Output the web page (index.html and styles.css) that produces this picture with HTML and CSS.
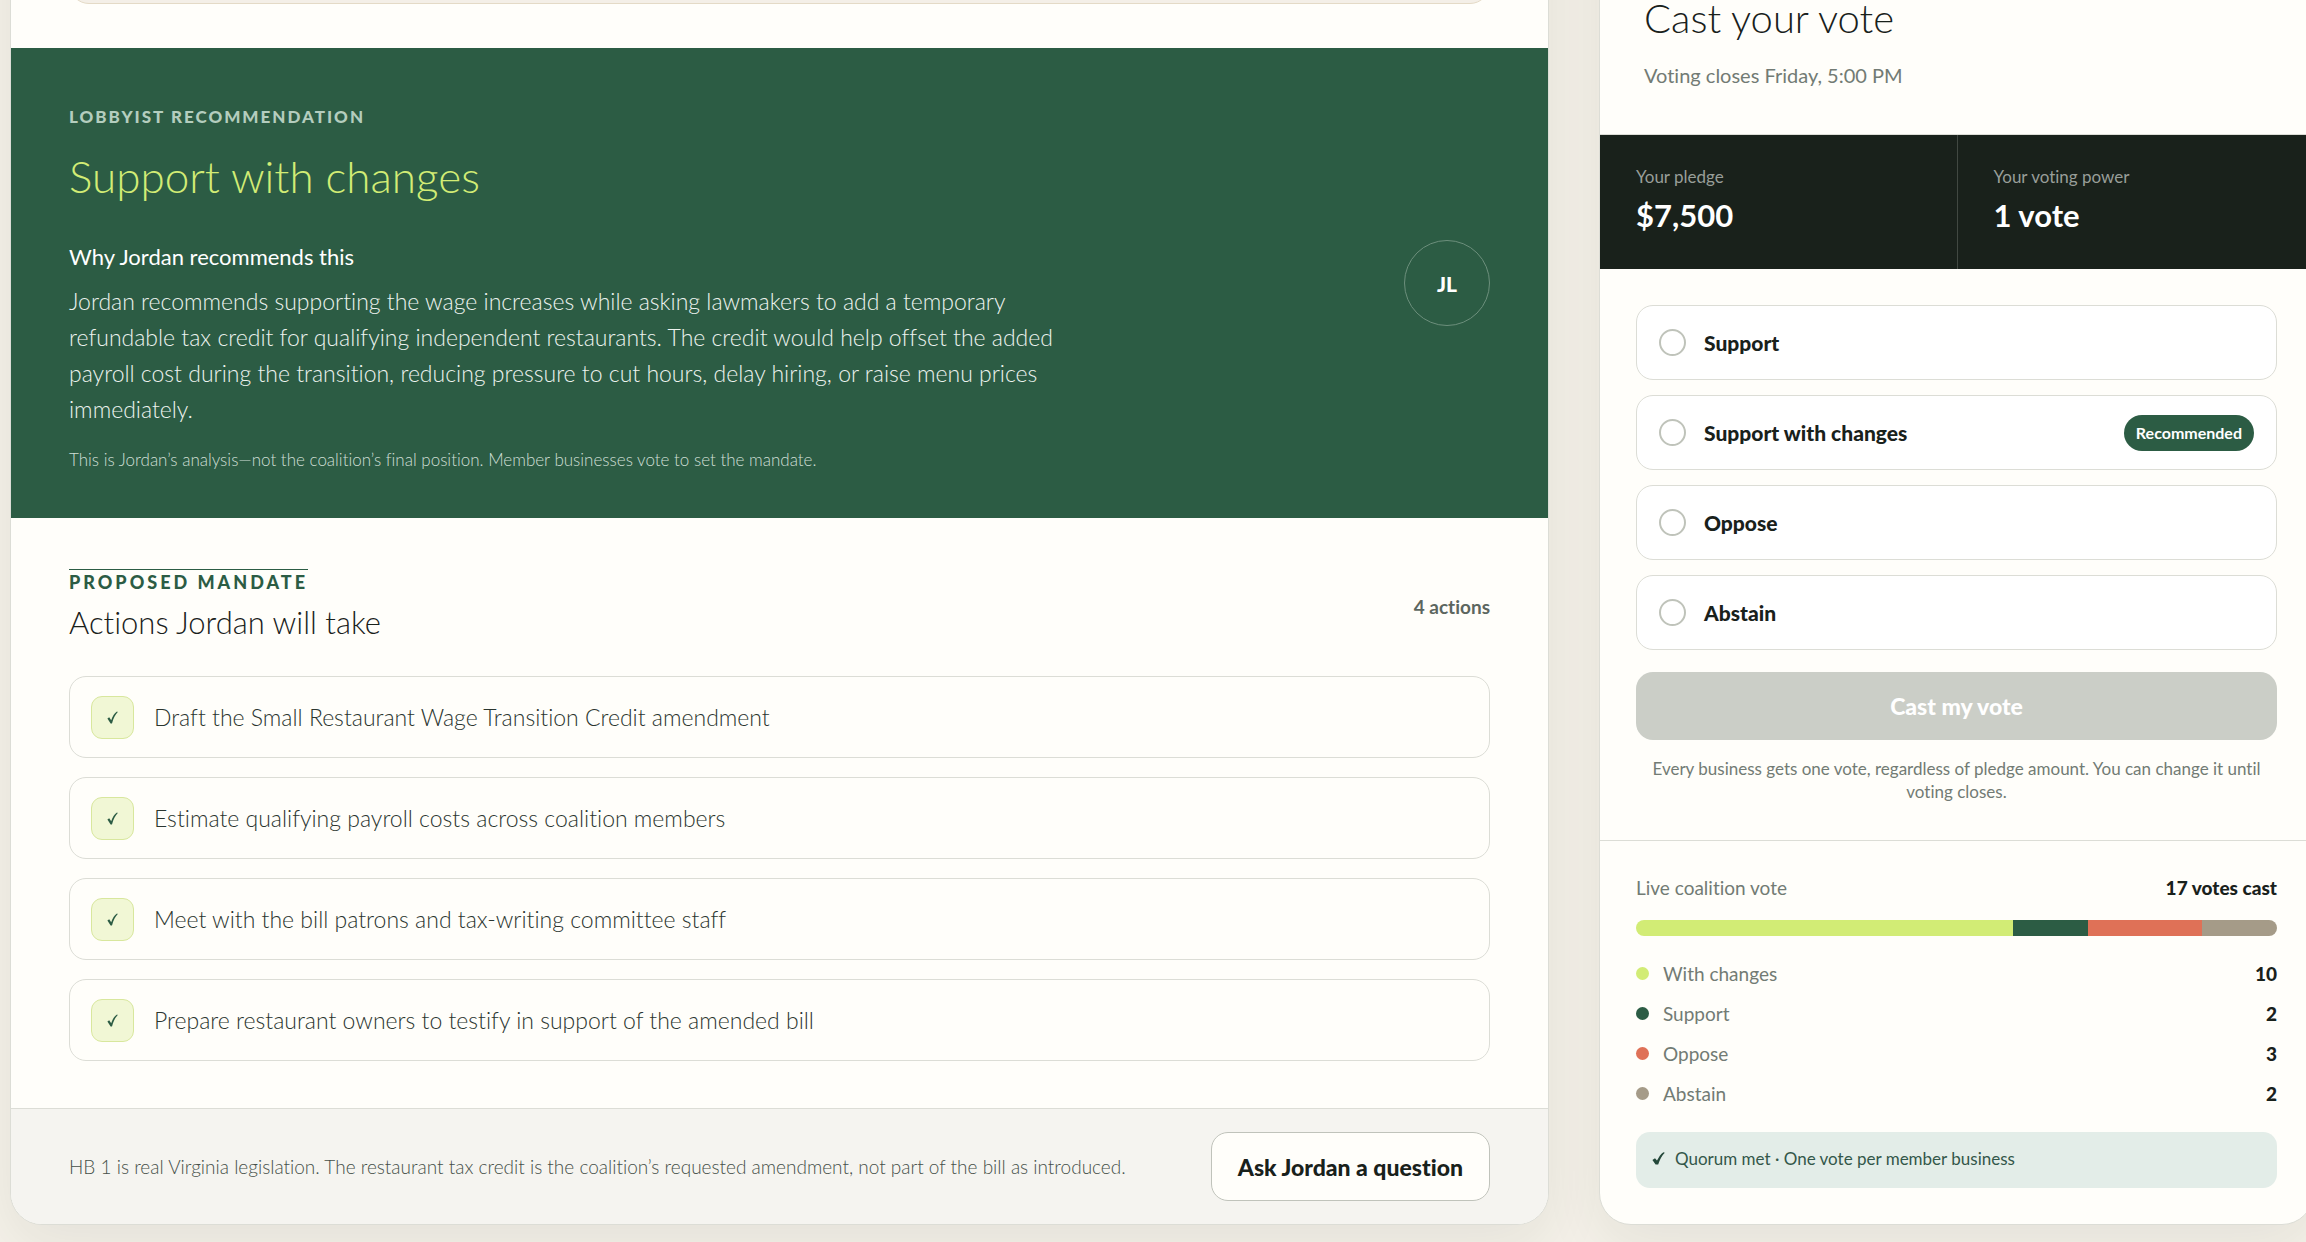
FILE: index.html
```
<!DOCTYPE html>
<html lang="en">
<head>
    <meta charset="UTF-8">
    <meta name="viewport" content="width=device-width, initial-scale=1.0">
    <title>HB 1 – Coalition vote</title>
    <link rel="stylesheet" href="styles.css">
</head>
<body>
<svg class="sprite" aria-hidden="true">
    <symbol id="check" viewBox="0 0 11 13">
        <path d="M0.4 7.4 L2.2 6.2 L4.2 9.2 C5.4 5.4 7.4 2 10 0.4 L10.8 1 C8.2 3.6 6.4 7.4 5 12.4 L3.6 12.4 Z"/>
    </symbol>
    <symbol id="check-heavy" viewBox="0 0 13 13">
        <path d="M0.4 8 L3 6.2 L5 8.6 C6.6 5.2 8.8 2 11.4 0.2 L12.8 0.8 C10 3.6 7.8 7.6 6.2 12.4 L3.6 12.6 Z"/>
    </symbol>
</svg>

<div class="layout">
    <main class="card">
        <section class="summary">
            <div class="summary-box"></div>
        </section>

        <section class="recommendation">
            <div class="recommendation-text">
                <p class="eyebrow">LOBBYIST RECOMMENDATION</p>
                <h2>Support with changes</h2>
                <h3>Why Jordan recommends this</h3>
                <p class="reason">Jordan recommends supporting the wage increases while asking lawmakers to add a temporary refundable tax credit for qualifying independent restaurants. The credit would help offset the added payroll cost during the transition, reducing pressure to cut hours, delay hiring, or raise menu prices immediately.</p>
                <p class="note">This is Jordan’s analysis—not the coalition’s final position. Member businesses vote to set the mandate.</p>
            </div>
            <div class="avatar">JL</div>
        </section>

        <section class="mandate">
            <div class="mandate-head">
                <div>
                    <span class="mandate-label">PROPOSED MANDATE</span>
                    <h2>Actions Jordan will take</h2>
                </div>
                <span class="count">4 actions</span>
            </div>
            <ul class="actions">
                <li><span class="tick"><svg><use href="#check"/></svg></span>Draft the Small Restaurant Wage Transition Credit amendment</li>
                <li><span class="tick"><svg><use href="#check"/></svg></span>Estimate qualifying payroll costs across coalition members</li>
                <li><span class="tick"><svg><use href="#check"/></svg></span>Meet with the bill patrons and tax-writing committee staff</li>
                <li><span class="tick"><svg><use href="#check"/></svg></span>Prepare restaurant owners to testify in support of the amended bill</li>
            </ul>
        </section>

        <footer class="card-footer">
            <p>HB 1 is real Virginia legislation. The restaurant tax credit is the coalition’s requested amendment, not part of the bill as introduced.</p>
            <button type="button" class="ask-button">Ask Jordan a question</button>
        </footer>
    </main>

    <aside class="card">
        <header class="vote-head">
            <h2>Cast your vote</h2>
            <p>Voting closes Friday, 5:00 PM</p>
        </header>

        <dl class="stats">
            <div>
                <dt>Your pledge</dt>
                <dd>$7,500</dd>
            </div>
            <div>
                <dt>Your voting power</dt>
                <dd>1 vote</dd>
            </div>
        </dl>

        <form class="vote-form">
            <div class="options">
                <label class="option"><input type="radio" name="vote" value="support">Support</label>
                <label class="option"><input type="radio" name="vote" value="changes">Support with changes <span class="badge">Recommended</span></label>
                <label class="option"><input type="radio" name="vote" value="oppose">Oppose</label>
                <label class="option"><input type="radio" name="vote" value="abstain">Abstain</label>
            </div>
            <button type="submit" class="cast-button" disabled>Cast my vote</button>
            <p class="help">Every business gets one vote, regardless of pledge amount. You can change it until voting closes.</p>
        </form>

        <section class="results">
            <div class="results-head">
                <span>Live coalition vote</span>
                <strong>17 votes cast</strong>
            </div>
            <div class="bar">
                <span class="changes" style="flex-grow: 10"></span>
                <span class="support" style="flex-grow: 2"></span>
                <span class="oppose" style="flex-grow: 3"></span>
                <span class="abstain" style="flex-grow: 2"></span>
            </div>
            <ul class="legend">
                <li><i class="changes"></i>With changes<strong>10</strong></li>
                <li><i class="support"></i>Support<strong>2</strong></li>
                <li><i class="oppose"></i>Oppose<strong>3</strong></li>
                <li><i class="abstain"></i>Abstain<strong>2</strong></li>
            </ul>
            <p class="quorum"><svg><use href="#check-heavy"/></svg>Quorum met · One vote per member business</p>
        </section>
    </aside>
</div>
</body>
</html>
```
FILE: styles.css
```
:root {
    --ink: #19211b;
    --muted: #727b74;
    --green: #2c5c44;
    --lime: #d2ec75;
    --coral: #df7157;
    --tan: #a59b88;
    --paper: #fffefa;
    --line: #dcddd6;
}

* {
    box-sizing: border-box;
}

body {
    margin: 0;
    font-family: Lato, sans-serif;
    font-variant-ligatures: none;
    color: var(--ink);
    background: #f5f1e9;
    overflow: hidden;
}

h2, h3, p, ul, dl, dd {
    margin: 0;
    padding: 0;
    font-weight: inherit;
    list-style: none;
}

h2 {
    font-weight: 300;
}

button {
    font-family: inherit;
    font-variant-ligatures: inherit;
    font-size: 23px;
    font-weight: 900;
    border-radius: 17px;
}

.sprite {
    display: none;
}

/* the page sits scrolled, so the tops of both cards are out of view */
.layout {
    display: grid;
    grid-template-columns: minmax(0, 1fr) 715px;
    gap: 50px;
    margin: -100px -8px 0 10px;
    padding-bottom: 60px;
}

.card {
    background: var(--paper);
    border: 1px solid var(--line);
    border-radius: 32px;
    box-shadow: 0 20px 60px rgba(24, 50, 30, 0.08);
    overflow: hidden;
}

.summary {
    padding: 40px 58px 44px;
}

.summary-box {
    height: 63px;
    background: #f4efe7;
    border: 1px solid #e4dac6;
    border-radius: 20px;
}

/* recommendation */
.recommendation {
    display: flex;
    justify-content: space-between;
    align-items: center;
    padding: 46px 58px;
    background: var(--green);
    color: #fff;
}

.recommendation-text {
    max-width: 1000px;
}

.eyebrow {
    font-size: 17px;
    font-weight: 900;
    line-height: 46px;
    letter-spacing: 2px;
    color: #b4cdbe;
}

.recommendation h2 {
    margin: 6px 0 36px;
    font-size: 44px;
    line-height: 60px;
    color: var(--lime);
}

.recommendation h3 {
    margin-bottom: 11px;
    font-size: 22px;
    line-height: 30px;
}

.reason {
    font-size: 23px;
    font-weight: 300;
    line-height: 36px;
    color: #edf3ef;
}

.note {
    margin-top: 21px;
    font-size: 17px;
    font-weight: 300;
    line-height: 24px;
    color: #cfdfd5;
}

.avatar {
    display: flex;
    justify-content: center;
    align-items: center;
    width: 86px;
    height: 86px;
    border: 1px solid #6c8f7c;
    border-radius: 50%;
    font-size: 21px;
    font-weight: 900;
}

/* mandate */
.mandate {
    padding: 51px 58px 47px;
}

.mandate-head {
    display: flex;
    justify-content: space-between;
    align-items: center;
    margin-bottom: 32px;
}

.mandate-label {
    display: inline-block;
    border-top: 1px solid var(--green);
    font-size: 18px;
    font-weight: 900;
    line-height: 24px;
    letter-spacing: 3px;
    color: var(--green);
    vertical-align: top;
}

.mandate h2 {
    margin-top: 6px;
    font-size: 31px;
    line-height: 44px;
}

.count {
    font-size: 19px;
    font-weight: 700;
    color: #5c665f;
}

.actions {
    display: grid;
    gap: 19px;
}

.actions li {
    display: flex;
    align-items: center;
    gap: 20px;
    min-height: 82px;
    padding: 0 21px;
    border: 1px solid var(--line);
    border-radius: 17px;
    font-size: 23px;
    font-weight: 300;
    color: #2b352f;
}

.tick {
    display: flex;
    justify-content: center;
    align-items: center;
    width: 43px;
    height: 43px;
    background: #f1f7d5;
    border: 1px solid #d8e79d;
    border-radius: 11px;
}

.tick svg {
    width: 11px;
    height: 13px;
    fill: var(--green);
}

.card-footer {
    display: flex;
    justify-content: space-between;
    align-items: center;
    padding: 23px 58px;
    background: #f5f4f0;
    border-top: 1px solid var(--line);
    font-size: 19px;
    font-weight: 300;
    color: #465049;
}

.ask-button {
    height: 69px;
    padding: 0 26px;
    background: var(--paper);
    border: 1px solid #c0c3bb;
    color: var(--ink);
}

/* vote panel */
.vote-head {
    padding: 99px 44px 44px;
    border-bottom: 1px solid var(--line);
}

.vote-head h2 {
    font-size: 40px;
    line-height: 36px;
}

.vote-head p {
    margin-top: 24px;
    font-size: 20px;
    line-height: 30px;
    color: var(--muted);
}

.stats {
    display: grid;
    grid-template-columns: 1fr 1fr;
    background: var(--ink);
    color: #fff;
}

.stats div {
    padding: 30px 36px 34px;
}

.stats div + div {
    border-left: 1px solid #414842;
}

.stats dt {
    font-size: 17px;
    line-height: 24px;
    color: #989e99;
}

.stats dd {
    margin-top: 6px;
    font-size: 31px;
    font-weight: 700;
    line-height: 40px;
}

.vote-form {
    padding: 36px 36px 37px;
}

.options {
    display: grid;
    gap: 15px;
}

.option {
    display: flex;
    align-items: center;
    min-height: 75px;
    padding: 0 22px;
    background: #fff;
    border: 1px solid var(--line);
    border-radius: 17px;
    font-size: 21px;
    font-weight: 900;
}

.option input {
    appearance: none;
    width: 27px;
    height: 27px;
    margin: 0 18px 0 0;
    border: 2px solid #bfc3ba;
    border-radius: 50%;
}

.option input:checked {
    border: 8px solid var(--green);
}

.badge {
    margin-left: auto;
    padding: 0 12px;
    background: var(--green);
    border-radius: 18px;
    font-size: 16px;
    font-weight: 700;
    line-height: 36px;
    color: #fff;
}

.cast-button {
    width: 100%;
    height: 68px;
    margin-top: 22px;
    background: #cbcec7;
    border: none;
    color: #fff;
}

.help {
    margin-top: 17px;
    font-size: 17px;
    line-height: 23px;
    text-align: center;
    color: var(--muted);
}

.results {
    padding: 34px 36px 35px;
    border-top: 1px solid var(--line);
    font-size: 19px;
    color: var(--muted);
}

.results strong {
    font-weight: 900;
    color: var(--ink);
}

.results-head {
    display: flex;
    justify-content: space-between;
    line-height: 26px;
}

.bar {
    display: flex;
    height: 16px;
    margin: 19px 0 24px;
    border-radius: 8px;
    overflow: hidden;
}

.legend {
    display: grid;
    gap: 13px;
    line-height: 27px;
}

.legend li {
    display: flex;
    align-items: center;
}

.legend i {
    width: 13px;
    height: 13px;
    margin-right: 14px;
    border-radius: 50%;
}

.legend strong {
    margin-left: auto;
}

.changes {
    background: var(--lime);
}

.support {
    background: var(--green);
}

.oppose {
    background: var(--coral);
}

.abstain {
    background: var(--tan);
}

.quorum {
    display: flex;
    align-items: center;
    gap: 10px;
    height: 56px;
    margin-top: 25px;
    padding: 0 16px 3px;
    background: #e3ede8;
    border-radius: 14px;
    font-size: 17px;
    color: #33574a;
}

.quorum svg {
    width: 13px;
    height: 13px;
    fill: #24483a;
}
```
